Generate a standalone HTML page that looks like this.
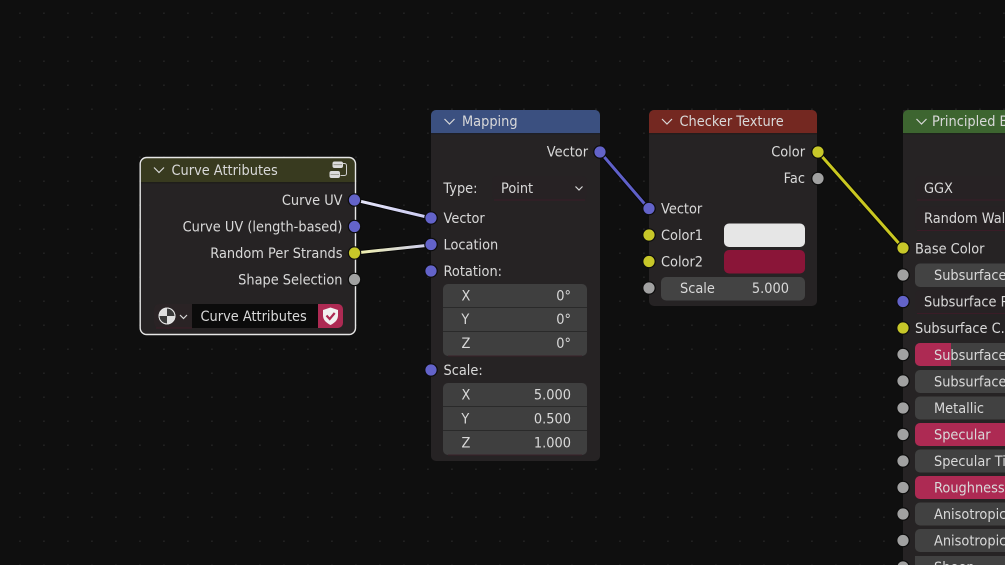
<!DOCTYPE html>
<html><head><meta charset="utf-8"><style>
html,body{margin:0;padding:0;background:#0f0f0f;width:1005px;height:565px;overflow:hidden}
svg{display:block;filter:blur(.3px)}
text{font-family:"DejaVu Sans",sans-serif;font-size:14.4px;fill:#d9d9d9;transform-box:fill-box;transform-origin:left center;transform:scaleX(.9)}
text.e{text-anchor:end;transform-origin:right center}
</style></head><body>
<svg width="1005" height="565" viewBox="0 0 1005 565" xmlns="http://www.w3.org/2000/svg">
<defs>
<pattern id="g" x="7.5" y="1" width="24" height="24" patternUnits="userSpaceOnUse"><rect x="11.700" y="11.500" width="1.500" height="1.500" fill="#252525"/></pattern>
<linearGradient id="w1" gradientUnits="userSpaceOnUse" x1="355" y1="200" x2="431" y2="218"><stop offset="0" stop-color="#e8e8fa"/><stop offset="1" stop-color="#c9c9f2"/></linearGradient>
<linearGradient id="w2" gradientUnits="userSpaceOnUse" x1="355" y1="253" x2="431" y2="245"><stop offset="0" stop-color="#f2f2a8"/><stop offset="1" stop-color="#c9c9f2"/></linearGradient>
<clipPath id="c1"><rect x="141" y="158" width="214" height="176" rx="6"/></clipPath>
<clipPath id="c2"><rect x="431" y="110" width="169" height="351" rx="5"/></clipPath>
<clipPath id="c3"><rect x="649" y="110" width="168" height="196" rx="5"/></clipPath>
<clipPath id="c4"><rect x="903" y="110" width="150" height="455" rx="5"/></clipPath>
<clipPath id="c5"><rect x="915" y="343" width="90" height="23" rx="5"/></clipPath>
</defs>
<rect width="1005" height="565" fill="#0f0f0f"/>
<rect width="1005" height="565" fill="url(#g)"/>

<!-- wires -->
<g fill="none" stroke-linecap="round">
<path d="M355 200L431 218" stroke="#000" stroke-width="5" opacity=".6"/>
<path d="M355 253L431 245" stroke="#000" stroke-width="5" opacity=".6"/>
<path d="M600 152L649 209" stroke="#000" stroke-width="5" opacity=".6"/>
<path d="M818 152L903 248" stroke="#000" stroke-width="5" opacity=".6"/>
<path d="M355 200L431 218" stroke="url(#w1)" stroke-width="3"/>
<path d="M355 253L431 245" stroke="url(#w2)" stroke-width="3"/>
<path d="M600 152L649 209" stroke="#5f60c8" stroke-width="3"/>
<path d="M818 152L903 248" stroke="#c9c721" stroke-width="3"/>
</g>

<!-- Curve Attributes -->
<rect x="140" y="157" width="216" height="178" rx="7" fill="#262324"/>
<g clip-path="url(#c1)"><rect x="140" y="157" width="216" height="25" fill="#383a1f"/><rect x="140" y="182" width="216" height="1.500" fill="#1f1e1a"/></g>
<rect x="140.200" y="157.500" width="215.300" height="177" rx="6.500" fill="none" stroke="#e6e6e6" stroke-width="1.400"/>
<path d="M154 167.500l5 5 5-5" fill="none" stroke="#d8d8d8" stroke-width="1.200"/>
<text x="171.500" y="175">Curve Attributes</text>
<path d="M342 163.500h2.500a2 2 0 0 1 2 2v8a2 2 0 0 1-2 2h-4" fill="none" stroke="#cfcfcf" stroke-width="1"/>
<g fill="#dcdcdc">
<rect x="332.500" y="161.500" width="10.500" height="6.500" rx="2"/><rect x="329.500" y="171" width="10.500" height="7" rx="2"/>
</g>
<path d="M333.500 164.700h8.500M330.500 174.500h8.500" stroke="#8a8a80" stroke-width=".8"/>
<text class="e" x="342.500" y="205">Curve UV</text>
<text class="e" x="342.500" y="231.500">Curve UV (length-based)</text>
<text class="e" x="342.500" y="258">Random Per Strands</text>
<text class="e" x="342.500" y="284.500">Shape Selection</text>
<rect x="154" y="304" width="189" height="24" rx="5" fill="#2a2325"/>
<rect x="192" y="304" width="126" height="24" fill="#0b0b0b"/>
<rect x="318" y="304" width="25" height="24" rx="5" fill="#ad2a53"/>
<rect x="318" y="304" width="6" height="24" fill="#ad2a53"/>
<path d="M156 328h36" stroke="#3f1c28" stroke-width="1"/>
<circle cx="167" cy="316" r="8.300" fill="#dedede"/>
<path d="M167 308.500a7.500 7.500 0 0 1 7.500 7.500H167z" fill="#3a3a3a"/>
<path d="M167 316h-7.500a7.500 7.500 0 0 0 7.500 7.500z" fill="#3a3a3a"/>
<circle cx="167" cy="316" r="8" fill="none" stroke="#e6e6e6" stroke-width="1"/>
<path d="M180 315l3.500 3.500 3.500-3.500" fill="none" stroke="#d8d8d8" stroke-width="1.200"/>
<text x="200.500" y="321">Curve Attributes</text>
<path d="M330.500 307.500l7.500 2.500v5.500c0 4.500-3.500 7.500-7.500 9.500-4-2-7.500-5-7.500-9.500V310z" fill="#f1f1f1"/>
<path d="M326.500 315.500l3.200 3.500 5-6" fill="none" stroke="#ad2a53" stroke-width="2.200"/>

<!-- Mapping -->
<rect x="431" y="110" width="169" height="351" rx="5" fill="#262324"/>
<g clip-path="url(#c2)"><rect x="431" y="110" width="169" height="23" fill="#3b5080"/><rect x="431" y="133" width="169" height="1.500" fill="#1e1f26"/></g>
<path d="M444.500 119l5 5 5-5" fill="none" stroke="#d8d8d8" stroke-width="1.200"/>
<text x="462" y="126">Mapping</text>
<text class="e" x="588" y="156.500">Vector</text>
<text x="443.500" y="193">Type:</text>
<rect x="492" y="176" width="95" height="24" rx="5" fill="#272224"/>
<path d="M494 200h91" stroke="#3a1c27" stroke-width="1"/>
<text x="501" y="193">Point</text>
<path d="M575.500 186.500l3.500 3.500 3.500-3.500" fill="none" stroke="#d8d8d8" stroke-width="1.200"/>
<text x="443.500" y="223">Vector</text>
<text x="443.500" y="249.500">Location</text>
<text x="443.500" y="276">Rotation:</text>
<rect x="443" y="284" width="144" height="72" rx="5" fill="#3f3f3f"/>
<path d="M443 307.500h144M443 331.500h144" stroke="#2a2a2a" stroke-width="1"/>
<path d="M448 356h134" stroke="#3a2029" stroke-width="1"/>
<text x="461.500" y="300.500">X</text><text class="e" x="571" y="300.500">0°</text>
<text x="461.500" y="324">Y</text><text class="e" x="571" y="324">0°</text>
<text x="461.500" y="348">Z</text><text class="e" x="571" y="348">0°</text>
<text x="443.500" y="375">Scale:</text>
<rect x="443" y="383" width="144" height="72" rx="5" fill="#3f3f3f"/>
<path d="M443 406.500h144M443 430.500h144" stroke="#2a2a2a" stroke-width="1"/>
<path d="M448 455h134" stroke="#3a2029" stroke-width="1"/>
<text x="461.500" y="399.500">X</text><text class="e" x="571" y="399.500">5.000</text>
<text x="461.500" y="423.500">Y</text><text class="e" x="571" y="423.500">0.500</text>
<text x="461.500" y="447.500">Z</text><text class="e" x="571" y="447.500">1.000</text>

<!-- Checker -->
<rect x="649" y="110" width="168" height="196" rx="5" fill="#262324"/>
<g clip-path="url(#c3)"><rect x="649" y="110" width="168" height="23" fill="#742821"/><rect x="649" y="133" width="168" height="1.500" fill="#241c1c"/></g>
<path d="M662 119l5 5 5-5" fill="none" stroke="#d8d8d8" stroke-width="1.200"/>
<text x="679.500" y="126">Checker Texture</text>
<text class="e" x="805" y="156.500">Color</text>
<text class="e" x="805" y="183">Fac</text>
<text x="661" y="213.500">Vector</text>
<text x="661" y="240">Color1</text>
<text x="661" y="266.500">Color2</text>
<rect x="724" y="223.500" width="81" height="23.500" rx="5" fill="#e6e6e6"/>
<rect x="724" y="250" width="81" height="23.500" rx="5" fill="#8a1538"/>
<rect x="661" y="277" width="144" height="23.500" rx="5" fill="#434343"/>
<text x="680" y="293">Scale</text>
<text class="e" x="789" y="293">5.000</text>

<!-- Principled -->
<rect x="903" y="110" width="102" height="455" fill="#262324"/>
<g clip-path="url(#c4)"><rect x="903" y="110" width="102" height="23" fill="#3d6530"/><rect x="903" y="133" width="102" height="1.500" fill="#1e231c"/></g>
<path d="M916.500 119l5 5 5-5" fill="none" stroke="#d8d8d8" stroke-width="1.200"/>
<text x="932" y="126">Principled BSDF</text>
<rect x="915" y="176" width="120" height="24" rx="5" fill="#272224"/>
<path d="M917 200h110" stroke="#3a1c27"/>
<text x="924" y="193">GGX</text>
<rect x="915" y="206.500" width="120" height="24" rx="5" fill="#272224"/>
<path d="M917 230.500h110" stroke="#3a1c27"/>
<text x="924" y="223">Random Walk</text>
<text x="915" y="253.500">Base Color</text>
<rect x="915" y="263.500" width="120" height="23.500" rx="5" fill="#434343"/>
<text x="934" y="280">Subsurface</text>
<rect x="915" y="290" width="120" height="23.500" rx="5" fill="#272224"/>
<path d="M917 313.500h110" stroke="#3a1c27"/>
<text x="924" y="306.500">Subsurface Radius</text>
<text x="915" y="333">Subsurface C.</text>

<rect x="915" y="343" width="120" height="23" rx="5" fill="#414141"/>
<g clip-path="url(#c5)"><rect x="915" y="343" width="36" height="23" fill="#ad2a53"/></g>
<text x="934" y="360">Subsurface</text>
<rect x="915" y="370" width="120" height="23" rx="5" fill="#414141"/>
<text x="934" y="386.500">Subsurface</text>
<rect x="915" y="396.500" width="120" height="23" rx="5" fill="#414141"/>
<text x="934" y="413">Metallic</text>
<rect x="915" y="423" width="120" height="23" rx="5" fill="#ad2a53"/>
<text x="934" y="439.500">Specular</text>
<rect x="915" y="449.500" width="120" height="23" rx="5" fill="#414141"/>
<text x="934" y="466">Specular Tint</text>
<rect x="915" y="476" width="120" height="23" rx="5" fill="#ad2a53"/>
<text x="934" y="492.500">Roughness</text>
<rect x="915" y="502.500" width="120" height="23" rx="5" fill="#414141"/>
<text x="934" y="519">Anisotropic</text>
<rect x="915" y="529" width="120" height="23" rx="5" fill="#414141"/>
<text x="934" y="545.500">Anisotropic</text>
<rect x="915" y="556" width="120" height="9" fill="#414141"/>
<text x="934" y="572">Sheen</text>

<!-- sockets -->
<g stroke="#0c0c0c" stroke-width="1.200">
<g fill="#6363c9">
<circle cx="354.500" cy="200" r="6.200"/><circle cx="354.500" cy="226.500" r="6.200"/>
<circle cx="600" cy="152" r="6.200"/>
<circle cx="431" cy="218" r="6.200"/><circle cx="431" cy="244.500" r="6.200"/><circle cx="431" cy="271" r="6.200"/><circle cx="431" cy="370" r="6.200"/>
<circle cx="649" cy="208.500" r="6.200"/>
<circle cx="903" cy="301.500" r="6.200"/>
</g>
<g fill="#c7c729">
<circle cx="354.500" cy="253" r="6.200"/>
<circle cx="818" cy="152" r="6.200"/>
<circle cx="649" cy="235" r="6.200"/><circle cx="649" cy="261.500" r="6.200"/>
<circle cx="903" cy="248" r="6.200"/><circle cx="903" cy="328" r="6.200"/>
</g>
<g fill="#a1a1a1">
<circle cx="354.500" cy="279.500" r="6.200"/>
<circle cx="818" cy="178.500" r="6.200"/>
<circle cx="649" cy="288" r="6.200"/>
<circle cx="903" cy="275" r="6.200"/>
<circle cx="903" cy="354.500" r="6.200"/><circle cx="903" cy="381" r="6.200"/><circle cx="903" cy="408" r="6.200"/><circle cx="903" cy="434.500" r="6.200"/><circle cx="903" cy="461" r="6.200"/><circle cx="903" cy="487.500" r="6.200"/><circle cx="903" cy="514" r="6.200"/><circle cx="903" cy="540.500" r="6.200"/><circle cx="903" cy="567" r="6.200"/>
</g>
</g>
</svg>
</body></html>
